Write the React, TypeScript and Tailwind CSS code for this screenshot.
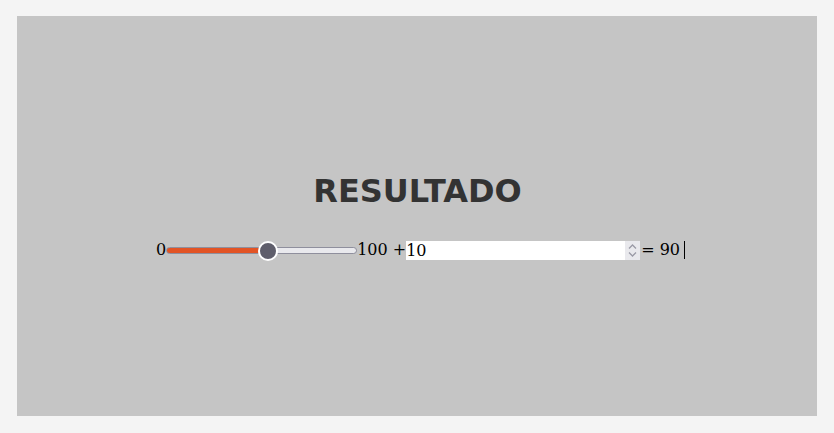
import { useState } from "react";

export default function App() {
  const [value, setValue] = useState(54);
  const [step, setStep] = useState(10);
  const pct = `${10 + (value / 100) * 170}px`;

  return (
    <div className="min-h-[433px] w-full bg-[#f4f4f4] pt-4 pl-[17px]">
      <div className="w-[800px] h-[400px] bg-[#c5c5c5] flex flex-col items-center pt-[156px]">
        <h1 className="font-['DejaVu_Sans',sans-serif] font-bold text-[32px] leading-[38px] text-[#333333] ml-[1px]">
          RESULTADO
        </h1>
        <div className="mt-[30px] flex items-center font-['DejaVu_Serif',serif] text-[16px] leading-5 text-black ml-[7px]">
          <span>0</span>
          <input
            type="range"
            min={0}
            max={100}
            value={value}
            onChange={(e) => setValue(Number(e.target.value))}
            style={{ ["--p" as string]: pct }}
            className="appearance-none bg-transparent w-[191px] h-[20px] cursor-pointer [&::-webkit-slider-runnable-track]:h-[7px] [&::-webkit-slider-runnable-track]:rounded-full [&::-webkit-slider-runnable-track]:border [&::-webkit-slider-runnable-track]:border-[#8f8f9d] [&::-webkit-slider-runnable-track]:bg-[linear-gradient(to_right,#e25425_var(--p),#e9e9ed_var(--p))] [&::-webkit-slider-thumb]:appearance-none [&::-webkit-slider-thumb]:w-[20px] [&::-webkit-slider-thumb]:h-[20px] [&::-webkit-slider-thumb]:rounded-full [&::-webkit-slider-thumb]:bg-[#5f5e6b] [&::-webkit-slider-thumb]:border-2 [&::-webkit-slider-thumb]:border-white [&::-webkit-slider-thumb]:mt-[-7px]"
          />
          <span>100 +</span>
          <div className="flex items-stretch bg-white w-[234px] h-[19px]">
            <input
              type="number"
              value={step}
              onChange={(e) => setStep(Number(e.target.value))}
              className="flex-1 min-w-0 h-full bg-transparent outline-none font-['DejaVu_Serif',serif] text-[16px] [appearance:textfield] [&::-webkit-inner-spin-button]:appearance-none [&::-webkit-outer-spin-button]:appearance-none"
            />
            <div className="w-[15px] bg-[#e9e9ed] flex flex-col items-center justify-center gap-[3px]">
              <svg width="9" height="5" viewBox="0 0 9 5" fill="none" stroke="#9a9aa6" strokeWidth="1.3">
                <path d="M1 4.5 L4.5 1 L8 4.5" />
              </svg>
              <svg width="9" height="5" viewBox="0 0 9 5" fill="none" stroke="#9a9aa6" strokeWidth="1.3">
                <path d="M1 0.5 L4.5 4 L8 0.5" />
              </svg>
            </div>
          </div>
          <span className="ml-[1px]">= {100 - step}</span>
          <span className="ml-[4px] w-[1px] h-[18px] bg-black" />
        </div>
      </div>
    </div>
  );
}
